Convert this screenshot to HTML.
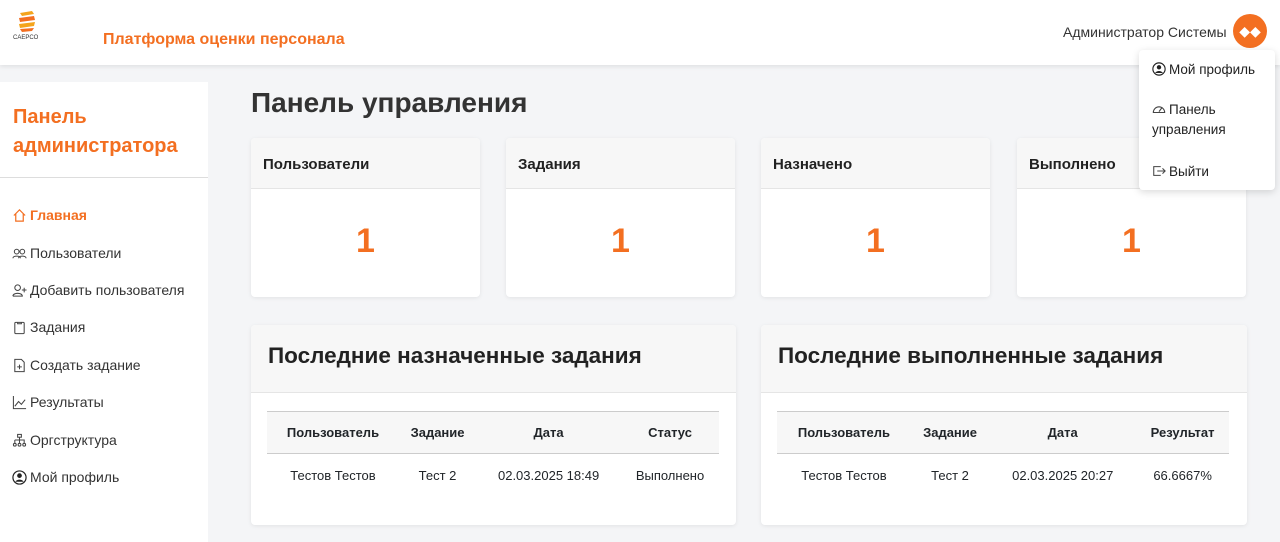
<!DOCTYPE html>
<html><head><meta charset="utf-8"><style>
*{box-sizing:border-box;margin:0;padding:0}
body{width:1280px;height:535px;overflow:hidden;background:#f4f5f7;font-family:"Liberation Sans","DejaVu Sans",sans-serif;color:#212529;position:relative}
.hdr{position:absolute;left:0;top:0;width:1280px;height:65px;background:#fff;box-shadow:0 2px 4px rgba(0,0,0,.08)}
.brand{position:absolute;left:103px;top:31px;color:#f36f21;font-weight:bold;font-size:16px}
.user{position:absolute;left:1063px;top:24px;font-size:14px;color:#333}
.av{position:absolute;left:1233px;top:14px;width:34px;height:34px;border-radius:50%;background:#f36f21;color:#fff;font-size:14px;text-align:center;line-height:34px}
.side{position:absolute;left:0;top:82px;width:208px;height:460px;background:#fff}
.side h2{color:#f36f21;font-size:20px;line-height:29px;padding:21px 0 0 13px;height:96px;border-bottom:1px solid #ddd}
.nav{position:absolute;left:12px;font-size:14px;color:#333;display:flex;align-items:center;gap:3px}
.nav svg{width:15px;height:15px}
h1{position:absolute;left:251px;top:87px;font-size:28px;font-weight:bold;color:#333}
.card{position:absolute;background:#fff;border-radius:4px;box-shadow:0 1px 4px rgba(0,0,0,.08);overflow:hidden}
.card .ch{background:#f7f7f7;border-bottom:1px solid #e5e5e5;color:#222;font-weight:bold}
.sc{top:138px;width:229px;height:159px}
.sc .ch{height:51px;padding:18px 12px;font-size:15px}
.sc .n{text-align:center;color:#f36f21;font-size:34px;font-weight:bold;margin-top:33px}
.bc{top:325px;width:485px;height:200px}
.bc .ch{height:68px;padding:18px 17px;font-size:22.5px}
table{position:absolute;left:16px;top:86px;width:452px;border-collapse:collapse;font-size:13px}
th{height:42px;background:#f7f7f7;border-top:1px solid #ccc;border-bottom:1px solid #ccc;font-weight:bold}
td{height:44px;text-align:center}
.dd{position:absolute;left:1139px;top:50px;width:136px;height:140px;background:#fff;border-radius:4px;box-shadow:0 2px 8px rgba(0,0,0,.15);font-size:13.5px;color:#222}
.dd div{position:absolute;left:13px;line-height:20px}
.dd svg{width:14px;height:14px;vertical-align:-2px;margin-right:3px}
</style></head><body>
<div class="hdr">
<svg style="position:absolute;left:10px;top:10px" width="34" height="34" viewBox="0 0 34 34"><path d="M10 3 L22 1 L24 4 L12 6Z" fill="#f4a41c"/><path d="M9 8 L24 6 L25 10 L10 12Z" fill="#f36f21"/><path d="M9 14 L25 12 L24 16 L10 18Z" fill="#f4a41c"/><path d="M10 19 L24 18 L22 21 L12 22Z" fill="#f36f21"/><text x="3" y="29" font-size="6" fill="#333" font-family="Liberation Sans">CAEPCO</text></svg>
<div class="brand">Платформа оценки персонала</div>
<div class="user">Администратор Системы</div>
<div class="av">◆◆</div>
</div>
<div class="side"><h2>Панель<br>администратора</h2></div>
<div class="nav" style="top:207px;color:#f36f21;font-weight:bold"><svg viewBox="0 0 16 16" fill="none" stroke="#f36f21" stroke-width="1.3"><path d="M2 8 L8 2 L14 8 M4 6 V14 H12 V6"/></svg>Главная</div>
<div class="nav" style="top:245px"><svg viewBox="0 0 16 16" fill="none" stroke="#444" stroke-width="1.1"><circle cx="5" cy="6" r="2.5"/><circle cx="11" cy="6" r="2.5"/><path d="M1 13c0-3 8-3 8 0M7 13c0-3 8-3 8 0"/></svg>Пользователи</div>
<div class="nav" style="top:282px"><svg viewBox="0 0 16 16" fill="none" stroke="#444" stroke-width="1.1"><circle cx="6" cy="5" r="3"/><path d="M1 14c0-4 10-4 10 0H1M13 5v5M10.5 7.5h5"/></svg>Добавить пользователя</div>
<div class="nav" style="top:319px"><svg viewBox="0 0 16 16" fill="none" stroke="#444" stroke-width="1.1"><rect x="3" y="2.5" width="10" height="12" rx="1"/><path d="M6 2.5v1.5h4V2.5"/></svg>Задания</div>
<div class="nav" style="top:357px"><svg viewBox="0 0 16 16" fill="none" stroke="#444" stroke-width="1.1"><path d="M3 1.5h7l3 3v10H3z M8 7v5M5.5 9.5h5"/></svg>Создать задание</div>
<div class="nav" style="top:394px"><svg viewBox="0 0 16 16" fill="none" stroke="#444" stroke-width="1.1"><path d="M1.5 1v13.5H15M3 12l4-5 3 3 4-5"/></svg>Результаты</div>
<div class="nav" style="top:432px"><svg viewBox="0 0 16 16" fill="none" stroke="#444" stroke-width="1.1"><rect x="6" y="1.5" width="4" height="3"/><path d="M8 4.5v3M3 7.5h10v3M3 7.5v3M8 7.5v3"/><circle cx="3" cy="12.5" r="1.5"/><circle cx="8" cy="12.5" r="1.5"/><circle cx="13" cy="12.5" r="1.5"/></svg>Оргструктура</div>
<div class="nav" style="top:469px"><svg viewBox="0 0 16 16"><circle cx="8" cy="8" r="7" fill="none" stroke="#222" stroke-width="1.3"/><circle cx="8" cy="6" r="2.5" fill="#222"/><path d="M3.5 12.5c2-3 7-3 9 0" fill="#222"/></svg>Мой профиль</div>
<h1>Панель управления</h1>
<div class="card sc" style="left:251px"><div class="ch">Пользователи</div><div class="n">1</div></div>
<div class="card sc" style="left:506px"><div class="ch">Задания</div><div class="n">1</div></div>
<div class="card sc" style="left:761px"><div class="ch">Назначено</div><div class="n">1</div></div>
<div class="card sc" style="left:1017px"><div class="ch">Выполнено</div><div class="n">1</div></div>
<div class="card bc" style="left:251px"><div class="ch">Последние назначенные задания</div>
<table><tr><th>Пользователь</th><th>Задание</th><th>Дата</th><th>Статус</th></tr><tr><td>Тестов Тестов</td><td>Тест 2</td><td>02.03.2025 18:49</td><td>Выполнено</td></tr></table></div>
<div class="card bc" style="left:761px;width:486px"><div class="ch">Последние выполненные задания</div>
<table><tr><th>Пользователь</th><th>Задание</th><th>Дата</th><th>Результат</th></tr><tr><td>Тестов Тестов</td><td>Тест 2</td><td>02.03.2025 20:27</td><td>66.6667%</td></tr></table></div>
<div class="dd">
<div style="top:10px"><svg viewBox="0 0 16 16"><circle cx="8" cy="8" r="7" fill="none" stroke="#222" stroke-width="1.3"/><circle cx="8" cy="6" r="2.5" fill="#222"/><path d="M3.5 12.5c2-3 7-3 9 0" fill="#222"/></svg>Мой профиль</div>
<div style="top:50px"><svg viewBox="0 0 16 16" fill="none" stroke="#444" stroke-width="1.2"><path d="M1.5 12a6.5 6.5 0 0 1 13 0zM8 11l3-4"/></svg>Панель<br>управления</div>
<div style="top:112px"><svg viewBox="0 0 16 16" fill="none" stroke="#444" stroke-width="1.2"><path d="M10 3H2v10h8M6 8h9M12 5l3 3-3 3"/></svg>Выйти</div>
</div>
</body></html>
